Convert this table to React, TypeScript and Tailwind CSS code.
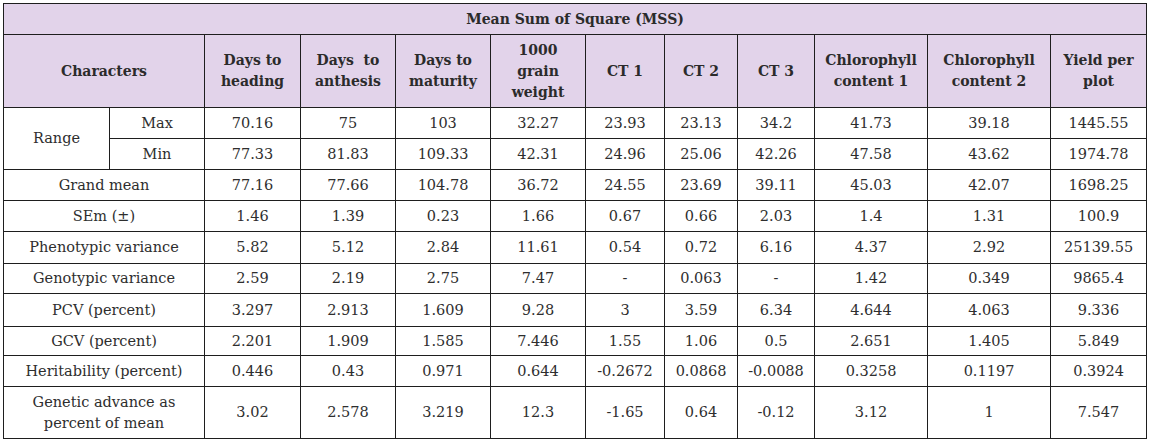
import React from "react";

const cols = [106, 95, 96, 95, 95, 95, 79, 73, 77, 113, 123, 96];

const headers = [
  ["Days to", "heading"],
  ["Days  to", "anthesis"],
  ["Days to", "maturity"],
  ["1000", "grain", "weight"],
  ["CT 1"],
  ["CT 2"],
  ["CT 3"],
  ["Chlorophyll", "content 1"],
  ["Chlorophyll", "content 2"],
  ["Yield per", "plot"],
];

const rows: { label: string; vals: string[]; h: number }[] = [
  { label: "Grand mean", vals: ["77.16", "77.66", "104.78", "36.72", "24.55", "23.69", "39.11", "45.03", "42.07", "1698.25"], h: 31 },
  { label: "SEm (±)", vals: ["1.46", "1.39", "0.23", "1.66", "0.67", "0.66", "2.03", "1.4", "1.31", "100.9"], h: 31 },
  { label: "Phenotypic variance", vals: ["5.82", "5.12", "2.84", "11.61", "0.54", "0.72", "6.16", "4.37", "2.92", "25139.55"], h: 32 },
  { label: "Genotypic variance", vals: ["2.59", "2.19", "2.75", "7.47", "-", "0.063", "-", "1.42", "0.349", "9865.4"], h: 30 },
  { label: "PCV (percent)", vals: ["3.297", "2.913", "1.609", "9.28", "3", "3.59", "6.34", "4.644", "4.063", "9.336"], h: 33 },
  { label: "GCV (percent)", vals: ["2.201", "1.909", "1.585", "7.446", "1.55", "1.06", "0.5", "2.651", "1.405", "5.849"], h: 29 },
  { label: "Heritability (percent)", vals: ["0.446", "0.43", "0.971", "0.644", "-0.2672", "0.0868", "-0.0088", "0.3258", "0.1197", "0.3924"], h: 31 },
];

const cell = "border border-[#1e1e1e] text-center align-middle p-0";
const head = `${cell} font-bold text-[14px] text-[#2b2b2b]`;

export default function App() {
  return (
    <div className="bg-white w-[1149px] h-[442px] pt-[3px] pl-[3px]" style={{ fontFamily: '"DejaVu Serif", serif' }}>
      <table className="table-fixed border-collapse text-[14.5px] text-[#2e2e2e] leading-[21px]" style={{ width: 1143 }}>
        <colgroup>
          {cols.map((w, i) => (
            <col key={i} style={{ width: w }} />
          ))}
        </colgroup>
        <tbody>
          <tr className="h-[31px] bg-[#e2d3ea]">
            <td colSpan={12} className={head}>Mean Sum of Square (MSS)</td>
          </tr>
          <tr className="h-[73px] bg-[#e2d3ea]">
            <td colSpan={2} className={head}>Characters</td>
            {headers.map((h, i) => (
              <td key={i} className={head}>
                {h.map((l, j) => (
                  <div key={j} className="whitespace-pre">{l}</div>
                ))}
              </td>
            ))}
          </tr>
          <tr className="h-[31px]">
            <td rowSpan={2} className={cell}>Range</td>
            <td className={cell}>Max</td>
            {["70.16", "75", "103", "32.27", "23.93", "23.13", "34.2", "41.73", "39.18", "1445.55"].map((v, i) => (
              <td key={i} className={cell}>{v}</td>
            ))}
          </tr>
          <tr className="h-[31px]">
            <td className={cell}>Min</td>
            {["77.33", "81.83", "109.33", "42.31", "24.96", "25.06", "42.26", "47.58", "43.62", "1974.78"].map((v, i) => (
              <td key={i} className={cell}>{v}</td>
            ))}
          </tr>
          {rows.map((r, i) => (
            <tr key={i} style={{ height: r.h }}>
              <td colSpan={2} className={cell}>{r.label}</td>
              {r.vals.map((v, j) => (
                <td key={j} className={cell}>{v}</td>
              ))}
            </tr>
          ))}
          <tr className="h-[52px]">
            <td colSpan={2} className={cell}>
              <div>Genetic advance as</div>
              <div>percent of mean</div>
            </td>
            {["3.02", "2.578", "3.219", "12.3", "-1.65", "0.64", "-0.12", "3.12", "1", "7.547"].map((v, i) => (
              <td key={i} className={cell}>{v}</td>
            ))}
          </tr>
        </tbody>
      </table>
    </div>
  );
}
